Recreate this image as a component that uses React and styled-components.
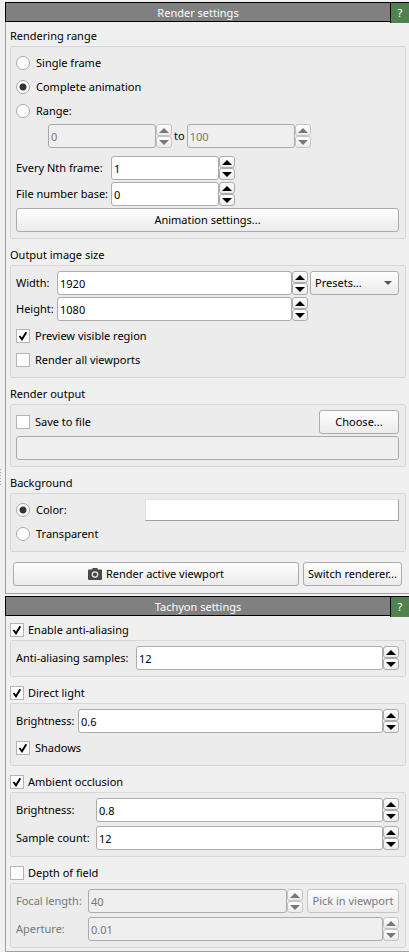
import React, { useId, useState } from "react";
import styled, { createGlobalStyle, css } from "styled-components";

const GlobalStyle = createGlobalStyle`
  *, *::before, *::after { box-sizing: border-box; }
  body {
    margin: 0;
    background: #f0f0f0;
    color: #000;
    font-family: "Noto Sans", "Open Sans", sans-serif;
    font-size: 11px;
    line-height: 20px;
  }
  button, input, select { font: inherit; color: inherit; margin: 0; }
`;

const Window = styled.div`
  display: grid;
  grid-template-columns: 5px minmax(0, 1fr);
  padding-top: 2px;
`;

const Grip = styled.div`
  align-self: center;
  width: 1px;
  height: 16px;
  background: repeating-linear-gradient(#a8a8a8 0 1px, transparent 1px 3px);
`;

const Panels = styled.main`
  display: flex;
  flex-direction: column;
  gap: 2px;
`;

const TitleBar = styled.header`
  display: grid;
  grid-template-columns: minmax(0, 1fr) 19px;
  height: 20px;
  border: 1px solid #000;
  border-right: 0;
  background: #808080;
  color: #fff;
`;

const PanelTitle = styled.h2`
  margin: 0;
  font-size: 11px;
  font-weight: 400;
  line-height: 20px;
  text-align: center;
`;

const HelpButton = styled.button`
  border: 0;
  border-left: 1px solid #000;
  padding: 0;
  background: #4f824f;
  color: #fff;
  line-height: 18px;
`;

const PanelBody = styled.div`
  display: flex;
  flex-direction: column;
  gap: 6px;
  padding: ${(p) => (p.$compact ? "4px 3px 3px 4px" : "4px 3px 7px 4px")};
  border-left: 1px solid #a0a0a0;
  border-bottom: 1px solid #a0a0a0;
`;

const SectionTitle = styled.h3`
  margin: 0;
  font-size: 11px;
  font-weight: 400;
  line-height: 20px;
`;

const Frame = styled.div`
  display: flex;
  flex-direction: column;
  gap: ${(p) => p.$gap ?? 2}px;
  padding: 5px 6px 6px 5px;
  border: 1px solid #d7d7d7;
  border-radius: 2px;
  background: #ececec;
`;

const Stack = styled.div`
  display: flex;
  flex-direction: column;
  gap: 2px;
`;

const Row = styled.div`
  display: flex;
  align-items: center;
  justify-content: ${(p) => (p.$spread ? "space-between" : "flex-start")};
  gap: ${(p) => p.$gap ?? 0}px;
  padding-left: ${(p) => p.$indent ?? 0}px;
`;

const FieldLabel = styled.label`
  flex: none;
  width: ${(p) => p.$width}px;
  line-height: 24px;
  white-space: nowrap;
  color: ${(p) => (p.$disabled ? "#787878" : "#000")};
`;

const ActionRow = styled.div`
  display: grid;
  grid-template-columns: minmax(0, 1fr) 99px;
  gap: 4px;
  padding: 4px 4px 0 3px;
`;

const raised = css`
  border: 1px solid #ababab;
  border-radius: 3px;
  background: linear-gradient(#fefefe, #ebebeb);
`;

const Button = styled.button`
  ${raised}
  display: flex;
  flex: none;
  align-items: center;
  justify-content: center;
  gap: 4px;
  width: ${(p) => (p.$width ? `${p.$width}px` : "auto")};
  height: 24px;
  padding: 0;
  line-height: 22px;
  white-space: nowrap;
  &:disabled { color: #787878; border-color: #c4c4c4; }
`;

const TextField = styled.input`
  flex: 1;
  width: 100%;
  min-width: 0;
  height: 24px;
  padding: 0 2px;
  border: 1px solid #ababab;
  border-radius: 3px;
  background: #fff;
  outline: 0;
  &:disabled { background: #efefef; color: #787878; }
`;

const SpinFrame = styled.div`
  display: flex;
  flex: ${(p) => (p.$width ? "none" : "1")};
  width: ${(p) => (p.$width ? `${p.$width}px` : "auto")};
  min-width: 0;
`;

const Arrows = styled.div`
  display: grid;
  flex: none;
  width: 16px;
  height: 24px;
  grid-template-rows: 12px 12px;
`;

const ArrowButton = styled.button`
  ${raised}
  display: grid;
  place-items: center;
  padding: 0;
  color: #000;
  &:disabled { color: #787878; border-color: #c4c4c4; }
`;

const Option = styled.label`
  display: flex;
  align-items: center;
  gap: ${(p) => p.$gap}px;
  height: ${(p) => (p.$header ? 20 : 22)}px;
`;

const Radio = styled.input`
  appearance: none;
  width: 14px;
  height: 14px;
  border: 1px solid #a8a8a8;
  border-radius: 50%;
  background: #fff;
  &:checked { background: radial-gradient(circle, #333 0 3px, #fff 4px); }
`;

const TickArea = styled.span`
  display: grid;
  place-items: center;
  width: 14px;
  height: 14px;
  & > * { grid-area: 1 / 1; }
  & > svg { pointer-events: none; }
`;

const Tick = styled.input`
  appearance: none;
  width: 14px;
  height: 14px;
  border: 1px solid #b4b4b4;
  background: #fff;
  & + svg { visibility: hidden; }
  &:checked + svg { visibility: visible; }
`;

const SelectArea = styled.div`
  display: grid;
  flex: none;
  width: 89px;
  align-items: center;
  & > * { grid-area: 1 / 1; }
  & > svg { justify-self: end; margin-right: 7px; pointer-events: none; }
`;

const Select = styled.select`
  ${raised}
  appearance: none;
  width: 100%;
  height: 24px;
  padding: 0 20px 0 4px;
`;

const Swatch = styled.button`
  width: 254px;
  height: 22px;
  padding: 0;
  border: 1px solid;
  border-color: #e3e3e3 #a0a0a0 #a0a0a0 #e3e3e3;
  background: #fff;
`;

function Triangle({ down }) {
  return (
    <svg width="10" height="5" viewBox="0 0 10 5" aria-hidden="true">
      <path d={down ? "M0 0h10L5 5z" : "M0 5h10L5 0z"} fill="currentColor" />
    </svg>
  );
}

function CameraIcon() {
  return (
    <svg width="14" height="12" viewBox="0 0 14 12" aria-hidden="true">
      <path d="M4 1.5 4.8 0h4.4L10 1.5h3q1 0 1 1V11q0 1-1 1H1q-1 0-1-1V2.500q0-1 1-1z" fill="#484848" />
      <circle cx="7" cy="6.500" r="2.700" fill="none" stroke="#ececec" strokeWidth="1.200" />
    </svg>
  );
}

function SpinBox({ label, labelWidth, labelledBy, value, width, disabled }) {
  const id = useId();
  const [text, setText] = useState(value);
  const digits = value.includes(".") ? value.split(".")[1].length : 0;
  const step = 10 ** -digits;
  const bump = (n) => setText((Number(text) + n * step).toFixed(digits));
  return (
    <>
      {label && (
        <FieldLabel htmlFor={id} $width={labelWidth} $disabled={disabled}>{label}</FieldLabel>
      )}
      <SpinFrame $width={width}>
        <TextField
          id={id}
          inputMode="decimal"
          aria-label={labelledBy}
          value={text}
          disabled={disabled}
          onChange={(e) => setText(e.target.value)}
        />
        <Arrows>
          <ArrowButton type="button" aria-label="Increase" disabled={disabled} onClick={() => bump(1)}>
            <Triangle />
          </ArrowButton>
          <ArrowButton type="button" aria-label="Decrease" disabled={disabled} onClick={() => bump(-1)}>
            <Triangle down />
          </ArrowButton>
        </Arrows>
      </SpinFrame>
    </>
  );
}

function RadioOption({ name, checked, children }) {
  return (
    <Option $gap={6}>
      <Radio type="radio" name={name} defaultChecked={checked} />
      {children}
    </Option>
  );
}

function CheckOption({ checked, header, children }) {
  return (
    <Option $gap={header ? 4 : 5} $header={header}>
      <TickArea>
        <Tick type="checkbox" defaultChecked={checked} />
        <svg width="14" height="14" viewBox="0 0 14 14" aria-hidden="true">
          <path d="M3.500 7 6 10.300 10.300 3.300" fill="none" stroke="#000" strokeWidth="1.900" />
        </svg>
      </TickArea>
      {children}
    </Option>
  );
}

function Section({ title, gap, children }) {
  return (
    <section>
      <SectionTitle>{title}</SectionTitle>
      <Frame $gap={gap}>{children}</Frame>
    </section>
  );
}

function CheckSection({ title, checked, children }) {
  return (
    <section>
      <CheckOption header checked={checked}>{title}</CheckOption>
      <Frame $gap={4}>{children}</Frame>
    </section>
  );
}

function Panel({ title, compact, children }) {
  return (
    <section>
      <TitleBar>
        <PanelTitle>{title}</PanelTitle>
        <HelpButton type="button">?</HelpButton>
      </TitleBar>
      <PanelBody $compact={compact}>{children}</PanelBody>
    </section>
  );
}

export default function App() {
  return (
    <Window>
      <GlobalStyle />
      <Grip />
      <Panels>
        <Panel title="Render settings">
          <Section title="Rendering range" gap={8}>
            <Stack>
              <RadioOption name="range">Single frame</RadioOption>
              <RadioOption name="range" checked>Complete animation</RadioOption>
              <RadioOption name="range">Range:</RadioOption>
              <Row $indent={32} $gap={2}>
                <SpinBox labelledBy="First frame" value="0" width={124} disabled />
                <span>to</span>
                <SpinBox labelledBy="Last frame" value="100" width={124} disabled />
              </Row>
            </Stack>
            <Stack>
              <Row><SpinBox label="Every Nth frame:" labelWidth={95} value="1" width={124} /></Row>
              <Row><SpinBox label="File number base:" labelWidth={95} value="0" width={124} /></Row>
              <Button type="button">Animation settings...</Button>
            </Stack>
          </Section>

          <Section title="Output image size" gap={4}>
            <Stack>
              <Row>
                <SpinBox label="Width:" labelWidth={41} value="1920" />
                <Row $indent={2}>
                  <SelectArea>
                    <Select aria-label="Presets"><option>Presets...</option></Select>
                    <svg width="8" height="4" viewBox="0 0 8 4" aria-hidden="true">
                      <path d="M0 0h8L4 4z" fill="#555" />
                    </svg>
                  </SelectArea>
                </Row>
              </Row>
              <Row>
                <SpinBox label="Height:" labelWidth={41} value="1080" width={251} />
              </Row>
            </Stack>
            <Stack>
              <CheckOption checked>Preview visible region</CheckOption>
              <CheckOption>Render all viewports</CheckOption>
            </Stack>
          </Section>

          <Section title="Render output">
            <Row $spread>
              <CheckOption>Save to file</CheckOption>
              <Button type="button" $width={80}>Choose...</Button>
            </Row>
            <Row><TextField aria-label="Output file" disabled /></Row>
          </Section>

          <Section title="Background">
            <Row $spread>
              <RadioOption name="background" checked>Color:</RadioOption>
              <Swatch type="button" aria-label="Background color" />
            </Row>
            <RadioOption name="background">Transparent</RadioOption>
          </Section>

          <ActionRow>
            <Button type="button"><CameraIcon />Render active viewport</Button>
            <Button type="button">Switch renderer...</Button>
          </ActionRow>
        </Panel>

        <Panel title="Tachyon settings" compact>
          <CheckSection title="Enable anti-aliasing" checked>
            <Row><SpinBox label="Anti-aliasing samples:" labelWidth={120} value="12" /></Row>
          </CheckSection>

          <CheckSection title="Direct light" checked>
            <Row><SpinBox label="Brightness:" labelWidth={62} value="0.6" /></Row>
            <CheckOption checked>Shadows</CheckOption>
          </CheckSection>

          <CheckSection title="Ambient occlusion" checked>
            <Row><SpinBox label="Brightness:" labelWidth={80} value="0.8" /></Row>
            <Row><SpinBox label="Sample count:" labelWidth={80} value="12" /></Row>
          </CheckSection>

          <CheckSection title="Depth of field">
            <Row>
              <SpinBox label="Focal length:" labelWidth={72} value="40" disabled />
              <Row $indent={4}>
                <Button type="button" $width={92} disabled>Pick in viewport</Button>
              </Row>
            </Row>
            <Row><SpinBox label="Aperture:" labelWidth={72} value="0.01" disabled /></Row>
          </CheckSection>
        </Panel>
      </Panels>
    </Window>
  );
}
